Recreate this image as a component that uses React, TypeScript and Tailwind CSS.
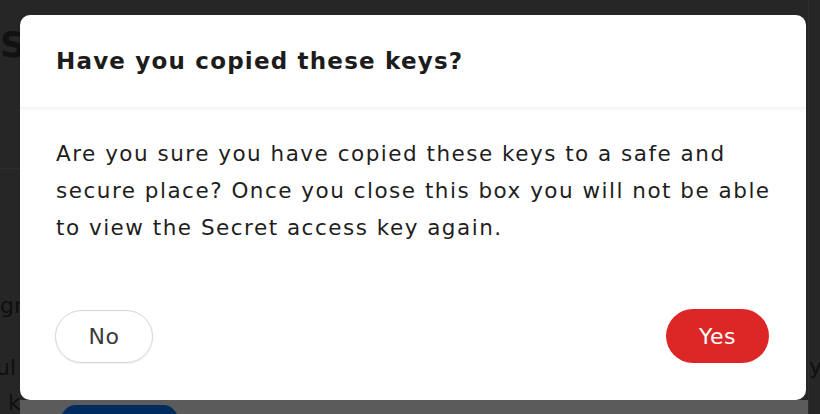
import React from "react";

export default function App() {
  const font = { fontFamily: "'DejaVu Sans', Inter, sans-serif" };
  return (
    <div className="relative w-[820px] h-[414px] overflow-hidden bg-[#262626]" style={font}>
      {/* backdrop page (dimmed) */}
      <div className="flex h-full">
        <div className="w-[20px] flex flex-col text-[#0f0f0f] overflow-hidden">
          <div className="mt-[25px] text-[36px] font-bold leading-[40px] text-[#111]">S</div>
          <div className="mt-[103px] h-px w-full bg-[#2e2e2e]" />
          <div className="mt-[124px] text-[22px] leading-[26px] whitespace-nowrap">gr</div>
          <div className="mt-[36px] text-[22px] leading-[26px] whitespace-nowrap -ml-[4px]">ul</div>
          <div className="mt-[11px] pl-[8px] text-[22px] leading-[22px]">k</div>
        </div>
        <div className="flex-1 flex flex-col">
          <div className="flex-1" />
          <div className="h-[14px] bg-[#5b5b5b] pl-[41px] pt-[5px]">
            <div className="w-[117px] h-[30px] rounded-full bg-[#002b5e]" />
          </div>
        </div>
        <div className="w-[12px] flex flex-col pt-[354px] text-[22px] text-[#0f0f0f] border-l border-[#303030] overflow-hidden">
          <span className="leading-[26px]">y</span>
        </div>
      </div>

      {/* modal */}
      <div className="absolute left-[20px] top-[15px] w-[786px] h-[385px] bg-white rounded-[10px] flex flex-col">
        <div className="h-[93px] px-[36px] flex items-center shadow-[0_2px_3px_rgba(0,0,0,0.04)] border-b border-[#f3f3f3]">
          <h2 className="text-[23px] font-bold text-[#1c1c1c] tracking-[1.2px]">Have you copied these keys?</h2>
        </div>
        <div className="px-[36px] pt-[27px]">
          <p className="text-[21.5px] leading-[37px] text-[#1e1e1e] tracking-[1.5px] w-[735px]">
            Are you sure you have copied these keys to a safe and secure place? Once you close this box you will not be able to view the Secret access key again.
          </p>
        </div>
        <div className="mt-auto mb-[37px] px-[35px] flex justify-between items-center">
          <button className="w-[98px] h-[53px] rounded-full border border-[#d6d6d6] bg-white text-[22px] text-[#3a3a3a] tracking-[0.5px] shadow-[0_1px_2px_rgba(0,0,0,0.06)]">
            No
          </button>
          <button className="w-[103px] h-[54px] rounded-full bg-[#dd2727] text-[22px] text-white tracking-[0.5px] mr-[2px]">
            Yes
          </button>
        </div>
      </div>
    </div>
  );
}
